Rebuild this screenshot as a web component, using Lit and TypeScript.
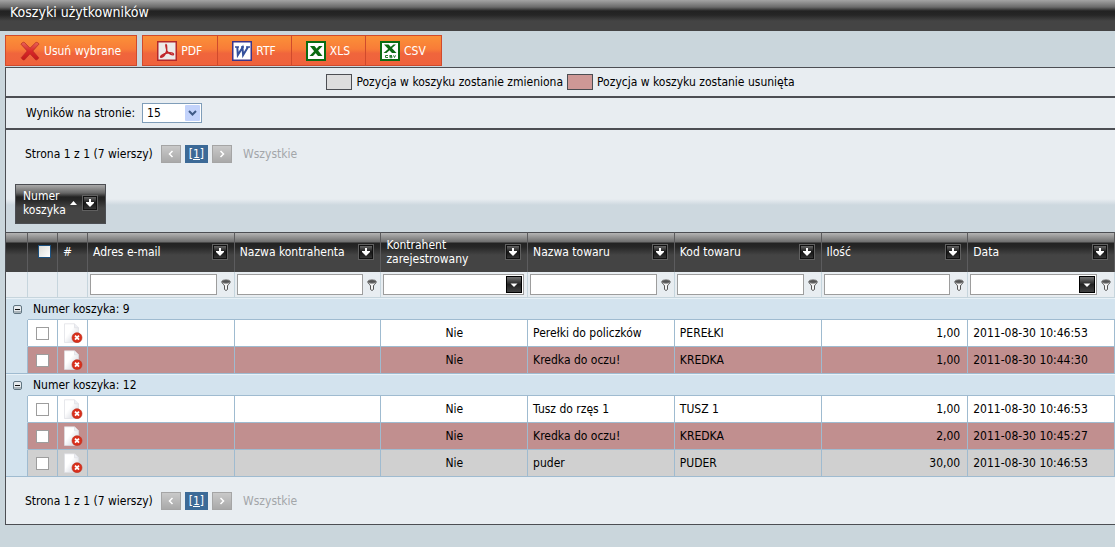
import { LitElement, html, css, svg } from "lit";
import { customElement, state } from "lit/decorators.js";

interface Row { name: string; code: string; qty: string; date: string; kind: "plain" | "removed" | "changed"; }
interface Basket { id: number; rows: Row[]; }

const BASKETS: Basket[] = [
  { id: 9, rows: [
    { name: "Perełki do policzków", code: "PEREŁKI", qty: "1,00", date: "2011-08-30 10:46:53", kind: "plain" },
    { name: "Kredka do oczu!", code: "KREDKA", qty: "1,00", date: "2011-08-30 10:44:30", kind: "removed" },
  ] },
  { id: 12, rows: [
    { name: "Tusz do rzęs 1", code: "TUSZ 1", qty: "1,00", date: "2011-08-30 10:46:53", kind: "plain" },
    { name: "Kredka do oczu!", code: "KREDKA", qty: "2,00", date: "2011-08-30 10:45:27", kind: "removed" },
    { name: "puder", code: "PUDER", qty: "30,00", date: "2011-08-30 10:46:53", kind: "changed" },
  ] },
];

const COLUMNS: { title: string; filter: "text" | "select" | "date" }[] = [
  { title: "Adres e-mail", filter: "text" },
  { title: "Nazwa kontrahenta", filter: "text" },
  { title: "Kontrahent zarejestrowany", filter: "select" },
  { title: "Nazwa towaru", filter: "text" },
  { title: "Kod towaru", filter: "text" },
  { title: "Ilość", filter: "text" },
  { title: "Data", filter: "date" },
];

const crossIcon = html`<svg width="20" height="20" viewBox="0 0 20 20" aria-hidden="true">
  <defs><linearGradient id="x" x1="0" y1="0" x2="0" y2="1"><stop offset="0" stop-color="#e8645a"/><stop offset=".5" stop-color="#d8282a"/><stop offset="1" stop-color="#c4181a"/></linearGradient></defs>
  <path d="M1 3.200C2 1.500 3.500.8 4.500 1.500L10 7.200l5.800-5.700c1-.6 2.700.4 3.200 1.600L12.800 10l6 6.800c-.5 1.200-2 2.400-3 2.200L10 12.800 4.300 19c-1 .3-2.700-1-3.100-2.300L7.200 10z" fill="url(#x)" stroke="#b32a20" stroke-width=".7"/>
</svg>`;
const pdfIcon = html`<svg width="20" height="20" viewBox="0 0 20 20" aria-hidden="true">
  <rect x=".75" y=".75" width="18.500" height="18.500" fill="#eceaea" stroke="#b3282b" stroke-width="1.500"/>
  <path d="M9 3.500C8 5 10.500 8 9.500 10.500 8.500 13 6 16 4 16.300 2 15.800 7 12.500 10 12c3-.7 7 0 6.500 1.500-1 1.300-5-1-6.500-3.500C9 8 10.500 4 9 3.500z" fill="none" stroke="#c0262b" stroke-width="1.400"/>
</svg>`;
const rtfIcon = html`<svg width="20" height="20" viewBox="0 0 20 20" aria-hidden="true">
  <rect x=".75" y=".75" width="18.500" height="18.500" fill="#fff" stroke="#3c3488" stroke-width="1.500"/>
  <path d="M3 6h4M9 6h3M14 6h4" stroke="#34509c" stroke-width="1.400"/>
  <path d="M5.300 6l.5 8L10.500 6.500l.6 7.500L16 6" fill="none" stroke="#34509c" stroke-width="2"/>
</svg>`;
const sheet = (small: boolean) => html`<svg width="20" height="20" viewBox="0 0 20 20" aria-hidden="true">
  <rect x="1" y="1" width="18" height="18" fill="#fff" stroke="#0b6b12" stroke-width="2"/>
  ${small
    ? svg`<path d="M4 3.500h4.500l8 8.500H12z" fill="#0b6b12"/><path d="M13.500 3.500H16L6.500 12H3.500z" fill="#0b6b12"/>
      <path d="M8 14.500H5.500v2H8M12 14.500h-2.300v1H12v1.200H9.500M13.500 14.300l1 2.200 1-2.200" fill="none" stroke="#2b7d31"/>`
    : svg`<path d="M4 5h4.500l8 10H12z" fill="#0b6b12"/><path d="M13 5h3.500L7 15H3.500z" fill="#0b6b12"/>`}
</svg>`;
const pageIcon = html`<svg width="20" height="20" viewBox="0 0 20 20" aria-hidden="true">
  <defs><linearGradient id="p" x1="0" y1="0" x2="1" y2="1"><stop offset=".4" stop-color="#fff"/><stop offset="1" stop-color="#c9ccd6"/></linearGradient></defs>
  <path d="M1.500.8h10l4 4v14.700h-14z" fill="url(#p)" stroke="#dcdee4" stroke-width=".7"/>
  <path d="M11.500.8v4h4" fill="#eceef2" stroke="#dcdee4" stroke-width=".7"/>
  <circle cx="14" cy="14.700" r="5" fill="#d92f1c" stroke="#b8301f" stroke-width=".6"/>
  <path d="M12 12.700l4 4M16 12.700l-4 4" stroke="#fff" stroke-width="1.800"/>
</svg>`;
const arrowIcon = html`<svg width="16" height="16" viewBox="0 0 16 16" aria-hidden="true">
  <defs><linearGradient id="a" x1="0" y1="0" x2="0" y2="1"><stop offset="0" stop-color="#666"/><stop offset=".5" stop-color="#151515"/><stop offset="1" stop-color="#333"/></linearGradient></defs>
  <rect x=".5" y=".5" width="15" height="15" fill="#111" stroke="#606060"/>
  <rect x="2" y="2" width="12" height="12" fill="url(#a)"/>
  <path d="M7 4h2v3h3v1l-4 4-4-4V7h3z" fill="#fff"/>
</svg>`;
const funnelIcon = html`<svg width="10" height="12" viewBox="0 0 10 12" aria-hidden="true">
  <path d="M.8 2.800C1 5 3.500 5.500 3.500 7v3.500L5 11.500l1.500-1V7C6.500 5.500 9 5 9.200 2.800z" fill="#f4f4f4" stroke="#555"/>
  <ellipse cx="5" cy="2.500" rx="4.200" ry="1.800" fill="#555" stroke="#888" stroke-width=".8"/>
</svg>`;
const dropIcon = html`<svg width="16" height="17" viewBox="0 0 16 17" aria-hidden="true">
  <defs><linearGradient id="d" x1="0" y1="0" x2="0" y2="1"><stop offset="0" stop-color="#777"/><stop offset=".5" stop-color="#222"/><stop offset="1" stop-color="#444"/></linearGradient></defs>
  <rect x=".5" y=".5" width="15" height="16" fill="url(#d)" stroke="#000"/>
  <path d="M4.500 7.500h7L8 11z" fill="#fff"/>
</svg>`;
const minusIcon = html`<svg width="9" height="9" viewBox="0 0 9 9" aria-hidden="true">
  <rect x=".5" y=".5" width="8" height="8" rx="1.500" fill="#e6eaed" stroke="#5f7480"/>
  <path d="M1 6.500h7M1 7.500h7" stroke="#aab4ba"/><path d="M2 4.500h5" stroke="#111"/>
</svg>`;
const chevron = (d: string) => html`<svg width="8" height="8" viewBox="0 0 8 8" aria-hidden="true"><path d=${d} fill="none" stroke="#fff" stroke-width="1.500"/></svg>`;

@customElement("app-root")
export class AppRoot extends LitElement {
  @state() private closed = new Set<number>();

  static styles = css`
    :host { display: block; min-height: 100vh; background: #cad6dc; color: #000;
      font: 12px/14px "DejaVu Sans Condensed", "DejaVu Sans", sans-serif; }
    * { box-sizing: border-box; }
    button, input, select { font: inherit; color: inherit; margin: 0; }
    button { padding: 0; border: 0; background: none; cursor: pointer; }
    svg { display: block; flex: none; }
    h1 { margin: 0; height: 31px; padding: 4px 10px; font-size: 14px; line-height: 16px; font-weight: normal; color: #fff;
      background: linear-gradient(#a4a4a4 0, #6b6b6b 7px, #222 11px, #262626 15px, #444 21px); }
    .toolbar { display: flex; gap: 5px; padding: 4px 0 1px 5px; }
    .group { display: flex; }
    .tool { display: flex; align-items: center; height: 31px; gap: 4px; padding: 0 15px 0 14px; color: #fff;
      border: 1px solid #d04a2c; background: linear-gradient(#fb9038 0, #f87c38 45%, #f0653c 60%, #ef623c 100%); }
    .tool + .tool { margin-left: -1px; }
    .panel { margin-left: 5px; border: 1px solid #4c4e53; border-right: 0; background: #e8edf1; }
    .legend { display: flex; justify-content: center; align-items: center; gap: 4px; height: 30px; border-bottom: 2px solid #4c4e53; }
    .swatch { width: 26px; height: 16px; border: 1px solid #4c4e53; background: #ddd; }
    .swatch.removed { background: #ce9896; }
    .size { display: flex; align-items: center; gap: 7px; height: 32px; padding-left: 20px; border-bottom: 2px solid #4c4e53; }
    .pick { display: grid; }
    .pick > * { grid-area: 1 / 1; }
    .pick select { appearance: none; width: 60px; height: 20px; padding: 0 4px; border: 1px solid #7f9db9; border-radius: 0; background: #fff; }
    .pick svg { justify-self: end; align-self: center; margin-right: 2px; pointer-events: none; }
    .pager { display: flex; align-items: center; gap: 8px; height: 47px; padding-left: 19px; }
    .steps { display: flex; gap: 4px; }
    .nav { display: grid; place-items: center; width: 20px; height: 18px; border: 1px solid #a5a5a5; background: linear-gradient(#c9c9c9, #a9a9a9); }
    .page { height: 18px; padding: 2px 4px; background: #3c6a97; color: #fff; }
    .all { margin-left: 3px; color: #a3a6a9; text-decoration: none; }
    .grouping { height: 55px; padding: 7px 9px; background: linear-gradient(#e8edf1 22px, #cdd8df 28px); }
    .chip { display: flex; align-items: center; gap: 5px; width: 91px; height: 40px; padding: 0 7px 2px; color: #fff; border: 1px solid #4c4e53;
      background: linear-gradient(#aaa 0, #666 8px, #222 12px, #262626 15px, #444 23px); }
    .chip .label { width: 42px; }
    table { width: 100%; table-layout: fixed; border-collapse: separate; border-spacing: 0; }
    th, td { padding: 0; font-weight: normal; text-align: left; }
    .tree { width: 22px; }
    .narrow { width: 30px; }
    thead th { height: 40px; padding: 0 0 2px 5px; color: #fff; border-top: 1px solid #4c4e53; border-right: 1px solid #5c5c5e;
      background: linear-gradient(#b4b4b4 0, #6e6e6e 9px, #222 10px, #262626 14px, #444 22px); }
    thead .pad { padding-left: 0; }
    .head { display: flex; align-items: center; justify-content: space-between; padding-right: 6px; }
    .head .label { max-width: 115px; }
    .filters td { height: 26px; border-right: 1px solid #c6d5dd; border-bottom: 1px solid #c6d5dd; }
    .filter { display: flex; align-items: center; gap: 4px; padding: 0 3px 0 2px; }
    .filter > input, .box { flex: 1; min-width: 0; height: 21px; border: 1px solid #9d9d9d; background: #fff; border-radius: 0; padding: 0 3px; }
    .filter > .box { display: grid; padding: 1px; }
    .box > * { grid-area: 1 / 1; }
    .box input, .box select { appearance: none; width: 100%; height: 17px; border: 0; padding: 0; background: #fff; }
    .box svg, .box button { justify-self: end; align-self: center; }
    .box > svg { pointer-events: none; }
    .section td { height: 22px; background: #d3e3ee; border-bottom: 1px solid #9fbbd0; border-top: 1px solid #e8f1f7; }
    .section .corner { border-bottom-color: #d3e3ee; }
    .corner button { display: block; margin-left: 7px; }
    .section .name { padding-left: 5px; }
    .item td { height: 27px; border-right: 1px solid #9fbbd0; border-bottom: 1px solid #9fbbd0; padding: 0 5px; background: #fff; }
    .item.removed td { background: #c18f8f; }
    .item.changed td { background: #d0d0d0; }
    .item td.indent { background: #d3e3ee; border-bottom-color: #d3e3ee; }
    .item:last-child td.indent { border-bottom-color: #9fbbd0; }
    .item td.center { text-align: center; padding: 0; }
    .item td.right { text-align: right; padding-right: 7px; }
    .item td.icon { padding: 2px 0 0 5px; }
    .check { appearance: none; display: block; width: 13px; height: 13px; margin: 0 auto; border: 1px solid #9d9d9d; background: #fff; }
    .check:checked { box-shadow: inset 0 0 0 2px #fff; background: #333; }
    .check.main { border-color: #1d5280; background: linear-gradient(135deg, #dcdcd7, #fff); margin-left: 10px; }
  `;

  private toggle(id: number) {
    const next = new Set(this.closed);
    if (!next.delete(id)) next.add(id);
    this.closed = next;
  }

  private pager() {
    return html`<nav class="pager" aria-label="Strony">
      <span>Strona 1 z 1 (7 wierszy)</span>
      <div class="steps">
        <button class="nav" aria-label="Poprzednia">${chevron("M5.500 1l-3 3 3 3")}</button>
        <a class="page" href="#1">[1]</a>
        <button class="nav" aria-label="Następna">${chevron("M2.500 1l3 3-3 3")}</button>
      </div>
      <a class="all" href="#all">Wszystkie</a>
    </nav>`;
  }

  private filterCell(title: string, kind: string) {
    if (kind === "select") {
      return html`<div class="filter"><div class="box"><select aria-label=${title}><option></option><option>Tak</option><option>Nie</option></select>${dropIcon}</div></div>`;
    }
    return html`<div class="filter">
      ${kind === "date"
        ? html`<div class="box"><input type="text" aria-label=${title}><button aria-label="Kalendarz">${dropIcon}</button></div>`
        : html`<input type="text" aria-label=${title}>`}
      <button aria-label="Filtr">${funnelIcon}</button>
    </div>`;
  }

  render() {
    return html`
      <h1>Koszyki użytkowników</h1>
      <div class="toolbar">
        <button class="tool">${crossIcon}Usuń wybrane</button>
        <div class="group">
          <button class="tool">${pdfIcon}PDF</button>
          <button class="tool">${rtfIcon}RTF</button>
          <button class="tool">${sheet(false)}XLS</button>
          <button class="tool">${sheet(true)}CSV</button>
        </div>
      </div>
      <main class="panel">
        <div class="legend">
          <span class="swatch"></span><span>Pozycja w koszyku zostanie zmieniona</span>
          <span class="swatch removed"></span><span>Pozycja w koszyku zostanie usunięta</span>
        </div>
        <div class="size">
          <label for="size">Wyników na stronie:</label>
          <div class="pick">
            <select id="size"><option>15</option><option>30</option><option>50</option></select>
            <svg width="15" height="16" viewBox="0 0 15 16" aria-hidden="true"><rect width="15" height="16" rx="1" fill="#c3d3fb"/><path d="M4 6l3.500 3.500L11 6" fill="none" stroke="#3f5a86" stroke-width="2"/></svg>
          </div>
        </div>
        ${this.pager()}
        <div class="grouping">
          <div class="chip"><span class="label">Numer koszyka</span>
            <svg width="7" height="4" viewBox="0 0 7 4" aria-hidden="true"><path d="M0 4l3.500-4L7 4z" fill="#fff"/></svg>
            <button aria-label="Filtruj numer koszyka">${arrowIcon}</button></div>
        </div>
        <table>
          <colgroup><col class="tree"><col class="narrow"><col class="narrow">${COLUMNS.map(() => html`<col>`)}</colgroup>
          <thead><tr>
            <th></th>
            <th class="pad"><input class="check main" type="checkbox" aria-label="Zaznacz wszystkie"></th>
            <th>#</th>
            ${COLUMNS.map(c => html`<th><div class="head"><span class="label">${c.title}</span><button aria-label="Filtruj: ${c.title}">${arrowIcon}</button></div></th>`)}
          </tr></thead>
          <tbody><tr class="filters"><td></td><td></td><td></td>
            ${COLUMNS.map(c => html`<td>${this.filterCell(c.title, c.filter)}</td>`)}</tr></tbody>
          ${BASKETS.map(b => html`<tbody>
            <tr class="section">
              <td class="corner"><button aria-label="Zwiń koszyk ${b.id}" @click=${() => this.toggle(b.id)}>${minusIcon}</button></td>
              <td class="name" colspan="9">Numer koszyka: ${b.id}</td>
            </tr>
            ${this.closed.has(b.id) ? "" : b.rows.map(r => html`<tr class="item ${r.kind}">
              <td class="indent"></td>
              <td class="center"><input class="check" type="checkbox" aria-label="Zaznacz ${r.name}"></td>
              <td class="icon"><button aria-label="Usuń ${r.name}">${pageIcon}</button></td>
              <td></td><td></td><td class="center">Nie</td>
              <td>${r.name}</td><td>${r.code}</td><td class="right">${r.qty}</td><td>${r.date}</td>
            </tr>`)}
          </tbody>`)}
        </table>
        ${this.pager()}
      </main>`;
  }
}
